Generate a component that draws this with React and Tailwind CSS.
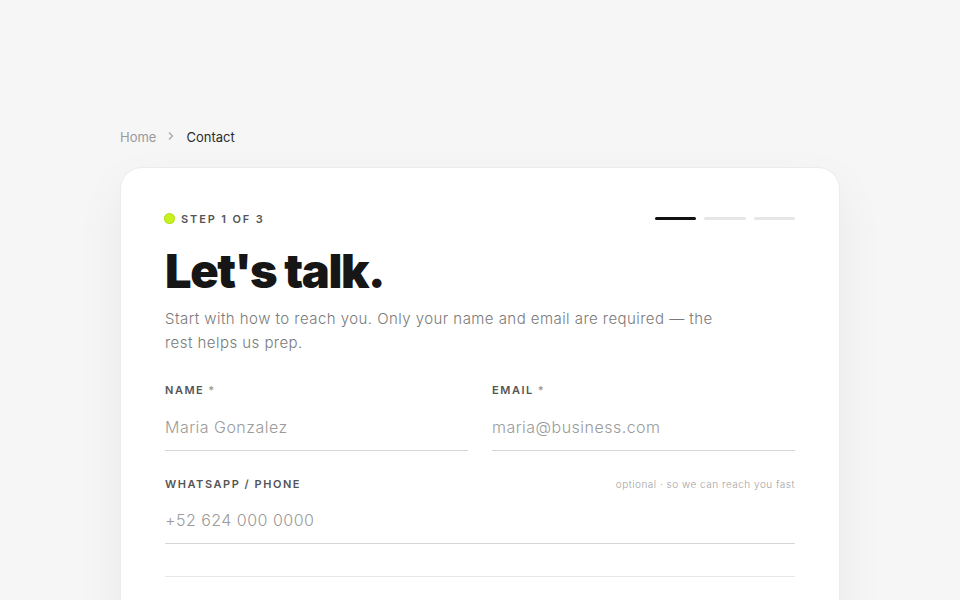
import { useState } from 'react';

const Field = ({ label, required, hint, placeholder, value, onChange, type = 'text' }) => (
  <label className="block">
    <div className="flex items-baseline justify-between">
      <span className="text-[11px] font-semibold tracking-[0.14em] text-[#555] uppercase">
        {label}
        {required && <span className="ml-1 text-[#9a9a9a]">*</span>}
      </span>
      {hint && <span className="text-[10px] font-light tracking-[0.05em] text-[#a3a3a3]">{hint}</span>}
    </div>
    <input
      type={type}
      placeholder={placeholder}
      value={value}
      onChange={(e) => onChange(e.target.value)}
      className="mt-[6px] w-full border-b border-[#d6d6d6] bg-transparent pt-[10px] pb-[11px] text-[16px] font-light tracking-[0.03em] text-[#222] placeholder-[#9b9b9b] focus:outline-none"
    />
  </label>
);

const App = () => {
  const [name, setName] = useState('');
  const [email, setEmail] = useState('');
  const [phone, setPhone] = useState('');

  return (
    <div className="min-h-screen bg-[#f6f6f6] pt-[128px] font-['Inter',sans-serif] overflow-hidden">
      <div className="mx-auto w-[720px]">

        {/* Breadcrumb */}
        <nav className="flex items-center gap-[11px] text-[13px]">
          <span className="text-[#9a9a9a]">Home</span>
          <svg width="8" height="10" viewBox="0 0 8 10" className="-mt-[4px]">
            <path d="M2 1.5 5.5 5 2 8.5" fill="none" stroke="#a8a8a8" strokeWidth="1.3" />
          </svg>
          <span className="text-[#2b2b2b]">Contact</span>
        </nav>

        {/* Card */}
        <div className="mt-[19px] h-[480px] rounded-[22px] border border-[#ececec] bg-white px-[44px] pt-[43px] shadow-[0_20px_50px_rgba(0,0,0,0.06)]">

          {/* Step indicator */}
          <div className="flex items-center justify-between">
            <div className="flex items-center gap-[7px]">
              <span className="h-[9px] w-[9px] rounded-full bg-[#c8f21c] ring-1 ring-[#b5dc10]" />
              <span className="text-[11px] font-semibold tracking-[0.17em] text-[#555]">STEP 1 OF 3</span>
            </div>
            <div className="flex gap-[8px]">
              <span className="h-[3px] w-[41px] rounded-full bg-[#111]" />
              <span className="h-[3px] w-[42px] rounded-full bg-[#e6e6e6]" />
              <span className="h-[3px] w-[41px] rounded-full bg-[#e6e6e6]" />
            </div>
          </div>

          <h1 className="mt-[20px] text-[47px] leading-none font-black tracking-[-0.03em] text-[#161616]">
            Let's talk.
          </h1>

          <p className="mt-[13px] max-w-[560px] text-[15px] leading-[24px] font-light tracking-[0.03em] text-[#7a7a7a]">
            Start with how to reach you. Only your name and email are required — the rest helps us prep.
          </p>

          <div className="mt-[27px] grid grid-cols-2 gap-x-[24px]">
            <Field label="Name" required placeholder="Maria Gonzalez" value={name} onChange={setName} />
            <Field label="Email" required type="email" placeholder="maria@business.com" value={email} onChange={setEmail} />
          </div>

          <div className="mt-[25px]">
            <Field
              label="WhatsApp / Phone"
              hint="optional · so we can reach you fast"
              placeholder="+52 624 000 0000"
              value={phone}
              onChange={setPhone}
            />
          </div>

          <div className="mt-[32px] border-t border-[#e8e8e8]" />
        </div>
      </div>
    </div>
  );
};

export default App;
